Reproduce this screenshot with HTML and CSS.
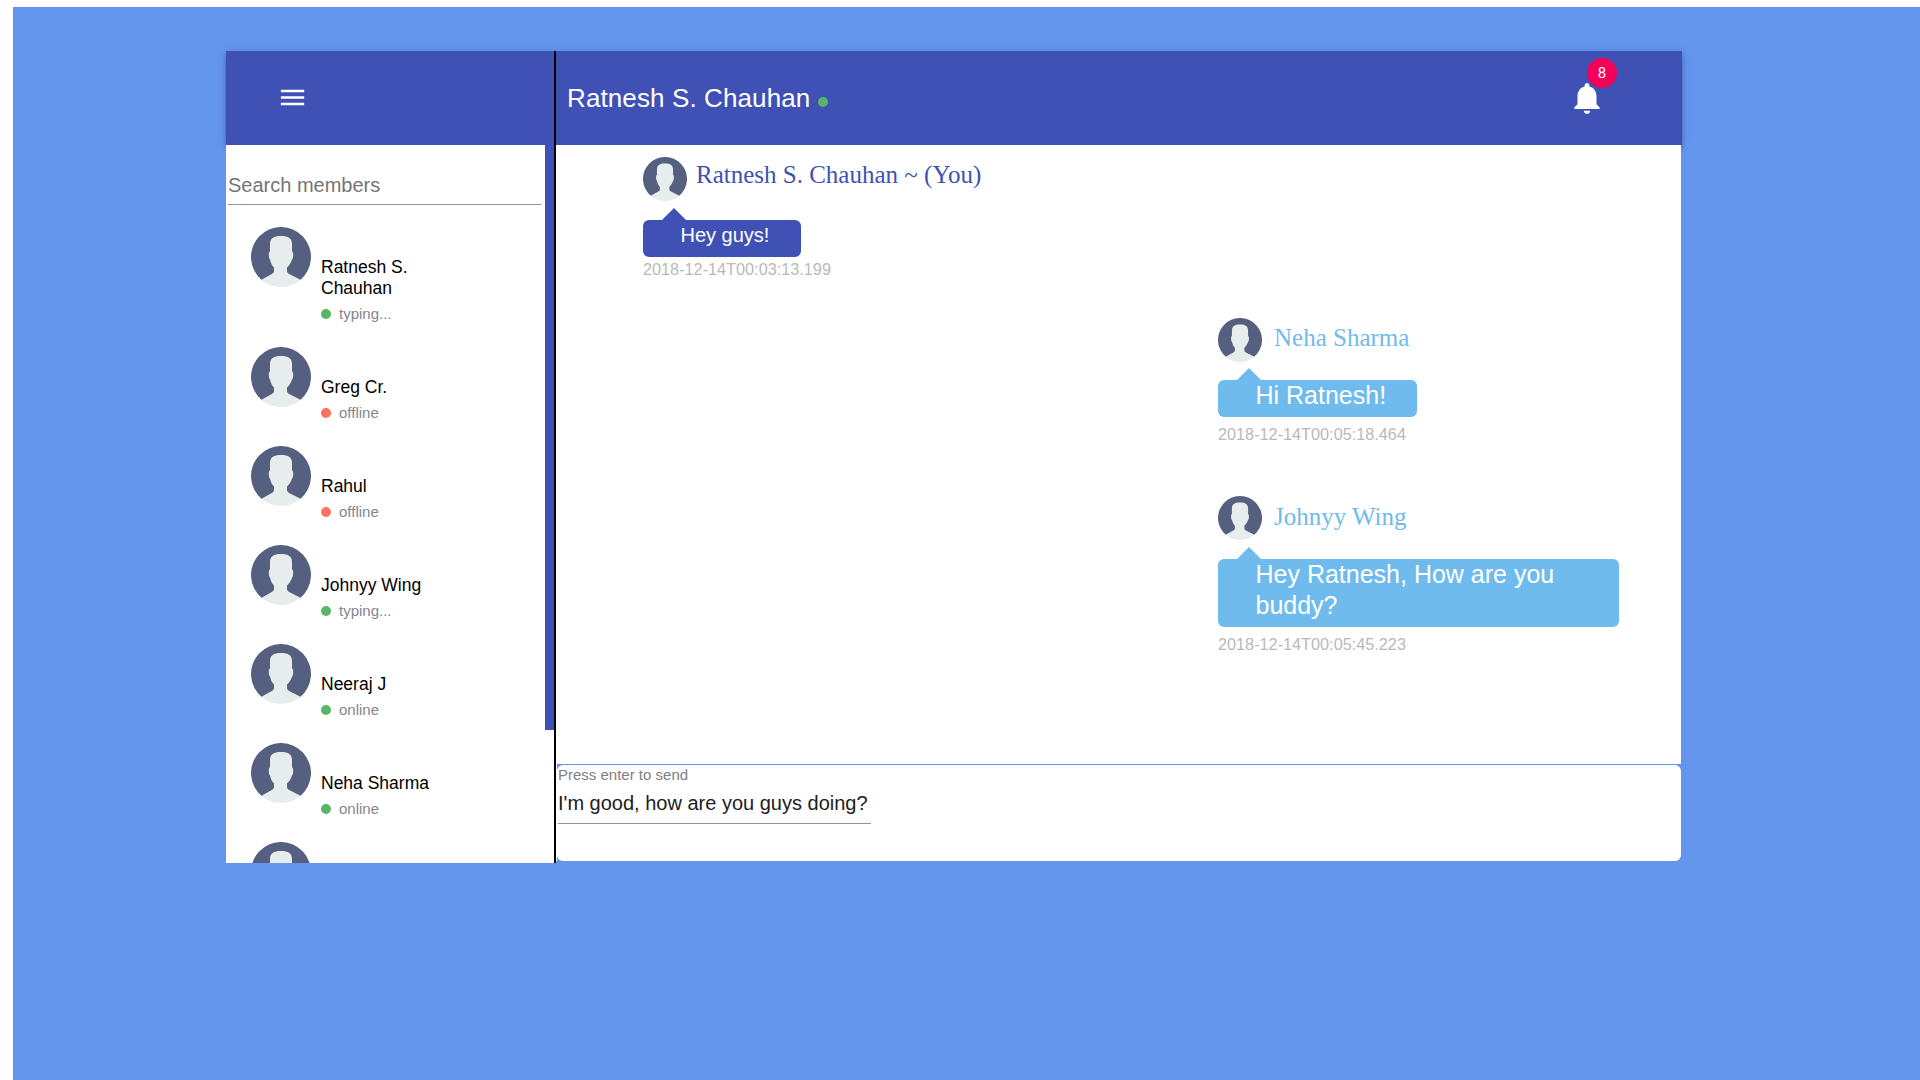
FILE: index.html
```html
<!DOCTYPE html>
<html lang="en">
<head>
<meta charset="utf-8">
<title>Chat</title>
<link rel="stylesheet" href="styles.css">
</head>
<body>
<svg class="defs" aria-hidden="true">
  <symbol id="avatar" viewBox="0 0 60 60">
    <path fill="#556080" d="M11 53.200A30 30 0 1 1 49 53.200L30 50Z"/>
    <path fill="#e7eced" d="M10.500 52.800L20.800 47C22.500 46 23 45.200 23 44V40.500C21 38.500 19.800 36 19.200 33C18.200 31.800 17.800 30.200 17.800 27.500C17.800 25.800 18.300 25 19 24.300V17C19 11.500 22.500 9 30 9S41 11.500 41 17V24.300C41.700 25 42.200 25.800 42.200 27.500C42.200 30.200 41.800 31.800 40.800 33C40 36 38 38.500 36 40.500V44C36 45.200 36.600 46 38.200 46.900L49.500 52.800A30 30 0 0 1 10.500 52.800Z"/>
  </symbol>
</svg>
<div class="page">
  <div class="chat">
    <header class="header">
      <div class="header-left">
        <svg class="menu-icon" viewBox="0 0 24 24"><path d="M3 18h18v-2H3v2zm0-5h18v-2H3v2zm0-7v2h18V6H3z"/></svg>
      </div>
      <div class="header-main">
        <h1 class="title">Ratnesh S. Chauhan</h1>
        <span class="dot title-dot"></span>
        <div class="bell">
          <svg class="bell-icon" viewBox="0 0 24 24"><path d="M12 22c1.100 0 2-.9 2-2h-4c0 1.100.89 2 2 2zm6-6v-5c0-3.070-1.640-5.640-4.500-6.320V4c0-.83-.67-1.500-1.500-1.500s-1.500.67-1.500 1.500v.68C7.630 5.360 6 7.920 6 11v5l-2 2v1h16v-1l-2-2z"/></svg>
          <span class="badge">8</span>
        </div>
      </div>
    </header>
    <div class="body">
      <aside class="sidebar">
        <div class="members">
          <div class="search">Search members</div>
          <ul class="list">
            <li class="member"><svg class="avatar"><use href="#avatar"/></svg><div class="about"><div class="name">Ratnesh S. Chauhan</div><div class="status"><span class="dot"></span>typing...</div></div></li>
            <li class="member"><svg class="avatar"><use href="#avatar"/></svg><div class="about"><div class="name">Greg Cr.</div><div class="status"><span class="dot off"></span>offline</div></div></li>
            <li class="member"><svg class="avatar"><use href="#avatar"/></svg><div class="about"><div class="name">Rahul</div><div class="status"><span class="dot off"></span>offline</div></div></li>
            <li class="member"><svg class="avatar"><use href="#avatar"/></svg><div class="about"><div class="name">Johnyy Wing</div><div class="status"><span class="dot"></span>typing...</div></div></li>
            <li class="member"><svg class="avatar"><use href="#avatar"/></svg><div class="about"><div class="name">Neeraj J</div><div class="status"><span class="dot"></span>online</div></div></li>
            <li class="member"><svg class="avatar"><use href="#avatar"/></svg><div class="about"><div class="name">Neha Sharma</div><div class="status"><span class="dot"></span>online</div></div></li>
            <li class="member"><svg class="avatar"><use href="#avatar"/></svg></li>
          </ul>
        </div>
        <div class="scrollbar"></div>
      </aside>
      <main class="main">
        <div class="messages">
          <article class="message mine">
            <div class="from"><svg class="avatar small"><use href="#avatar"/></svg><span class="author">Ratnesh S. Chauhan ~ (You)</span></div>
            <div class="bubble">Hey guys!</div>
            <time class="time">2018-12-14T00:03:13.199</time>
          </article>
          <article class="message other first">
            <div class="from"><svg class="avatar small"><use href="#avatar"/></svg><span class="author">Neha Sharma</span></div>
            <div class="bubble">Hi Ratnesh!</div>
            <time class="time">2018-12-14T00:05:18.464</time>
          </article>
          <article class="message other second">
            <div class="from"><svg class="avatar small"><use href="#avatar"/></svg><span class="author">Johnyy Wing</span></div>
            <div class="bubble">Hey Ratnesh, How are you buddy?</div>
            <time class="time">2018-12-14T00:05:45.223</time>
          </article>
        </div>
        <div class="composer">
          <div class="hint">Press enter to send</div>
          <div class="entry">I'm good, how are you guys doing?</div>
        </div>
      </main>
    </div>
  </div>
</div>
</body>
</html>
```
FILE: styles.css
```css
* { box-sizing: border-box; }
html { overflow: hidden; background: #fff; }
body { margin: 0; padding: 7px 0 0 13px; font-family: "Liberation Sans", Arial, sans-serif; }
.defs { display: none; }
.page { height: 1073px; padding: 44px 0 0 213px; background: #6495ed; }
.chat { width: 1456px; }

.header { display: flex; height: 94px; background: #3f51b5; color: #fff; box-shadow: 0 2px 4px -1px rgba(0,0,0,.2), 0 4px 5px rgba(0,0,0,.14), 0 1px 10px rgba(0,0,0,.12); }
.header-left { display: flex; align-items: center; width: 330px; padding-left: 51px; border-right: 2px solid #000; }
.menu-icon { width: 31px; height: 31px; margin-bottom: 1px; fill: #fff; }
.header-main { display: flex; flex: 1; align-items: center; padding-left: 11px; }
.title { margin: 0; font-size: 26px; font-weight: 400; line-height: 30px; letter-spacing: .11px; }
.dot { display: block; flex: none; width: 10px; height: 10px; border-radius: 50%; background: #5ab566; }
.dot.off { background: #ff725e; }
.title-dot { margin: 8px 0 0 8px; }
.bell { position: relative; width: 38px; height: 38px; margin: 0 76.5px 0 auto; }
.bell-icon { display: block; width: 38px; height: 38px; fill: #fff; }
.badge { position: absolute; top: -21px; left: 19.5px; width: 30px; height: 30px; border-radius: 50%; background: #f50057; font: 15px/30px Roboto, sans-serif; text-align: center; }

.body { display: flex; width: 1455px; height: 718px; position: relative; }
.sidebar { display: flex; width: 330px; border-right: 2px solid #000; background: #fff; }
.members { width: 319px; overflow: hidden; }
.search { width: 313px; height: 60px; margin-left: 2px; padding-top: 28px; border-bottom: 1px solid #949494; color: #757575; font-size: 20px; line-height: 24px; }
.list { margin: 0; padding: 22px 0 0 25px; list-style: none; }
.member { display: flex; gap: 10px; margin-bottom: 18px; }
.avatar { display: block; flex: none; width: 60px; height: 60px; }
.about { padding-top: 30px; }
.name { width: 110px; font-size: 17.5px; line-height: 21px; color: #000; }
.status { display: flex; align-items: center; gap: 8px; height: 30px; font-size: 15px; line-height: 30px; color: #86868c; }
.scrollbar { width: 9px; height: 585px; background: #3f51b5; }

.main { display: flex; flex-direction: column; width: 1125px; height: 716px; background: linear-gradient(to right, #fff 1px, #6495ed 1px); }
.messages { display: flex; flex-direction: column; height: 619px; padding: 12px 62px 0 87px; background: #fff; }
.message { display: flex; flex-direction: column; align-items: flex-start; }
.message.other { width: 401px; align-self: flex-end; }
.small { width: 44px; height: 44px; }
.from { display: flex; height: 63px; font: 25px/28px "Liberation Serif", "Times New Roman", serif; }
.author { white-space: nowrap; }
.mine .author { margin: 4px 0 0 9px; color: #3f51b5; }
.other .author { margin: 6px 0 0 12px; color: #6fbbed; }
.second .author { margin-top: 7px; }
.bubble { position: relative; padding: 0 31px 6px 37.5px; border-radius: 6px; color: #fff; font-size: 25px; line-height: 31px; }
.bubble::before { content: ""; position: absolute; left: 19px; bottom: 100%; border: solid transparent; border-width: 0 12.5px 12.5px; }
.mine .bubble { padding-right: 32px; background: #3f51b5; font-size: 20px; }
.mine .bubble::before { border-bottom-color: #3f51b5; }
.other .bubble { background: #6fbbed; }
.other .bubble::before { border-bottom-color: #6fbbed; }
.time { margin-top: 7px; color: #b9b9b9; font-size: 16.25px; line-height: 20px; }
.mine .time { margin-top: 2px; }
.first { margin-top: 39px; }
.first .from { height: 62px; }
.second { margin-top: 52px; }

.composer { height: 96px; margin: 1px 0 0 1px; padding: 0 1px; border-radius: 6px; background: #fff; }
.hint { height: 22px; color: #7f7f7f; font-size: 15px; line-height: 20px; }
.entry { width: 313px; height: 37px; border-bottom: 1px solid #949494; color: #212121; font-size: 20px; line-height: 32px; white-space: nowrap; }
```
